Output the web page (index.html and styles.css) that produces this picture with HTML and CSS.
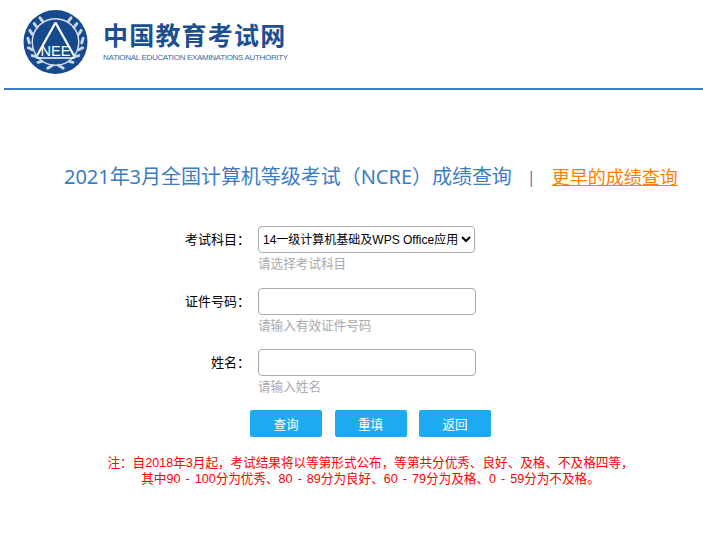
FILE: index.html
```html
<!DOCTYPE html>
<html lang="zh">
<head>
    <meta charset="UTF-8">
    <title>NCRE成绩查询</title>
<link rel="stylesheet" href="styles.css">
</head>
<body>
	<header class="top">
		<svg class="logo" width="65" height="64" viewBox="0 0 66 66">
			<circle cx="33" cy="33" r="33" fill="#164a8c"/>
			<circle cx="33" cy="33" r="24" fill="none" stroke="#d5e0ec" stroke-width="1.5"/>
			<path d="M33 13 L14 47 M33 13 L52 47" fill="none" stroke="#fff" stroke-width="2.2"/>
			<path d="M13 49.5 H53" stroke="#fff" stroke-width="1.5"/>
			<g fill="none" stroke="#c9d6e6" stroke-width="3" stroke-linecap="round">
				<path d="M4.5 29 L6 34 M6.5 21 L9 25 M11 14 L14 18 M17 8 L20 12 M5 39 L9 41 M9 47 L13 48 M15 54 L19 53"/>
				<path d="M61.500 29 L60 34 M59.500 21 L57 25 M55 14 L52 18 M49 8 L46 12 M61 39 L57 41 M57 47 L53 48 M51 54 L47 53"/>
				<path d="M25 60 L30 57 M41 60 L36 57"/>
			</g>
			<text class="logo-nee" x="33" y="47" text-anchor="middle">NEE</text>
		</svg>
		<div class="brand">
			<div class="brand-cn">中国教育考试网</div>
			<div class="brand-en">NATIONAL EDUCATION EXAMINATIONS AUTHORITY</div>
		</div>
	</header>
	<main>
		<h2 class="title">
			<span class="title-main">2021年3月全国计算机等级考试（NCRE）成绩查询</span>
			<span class="sep">|</span>
			<a href="#">更早的成绩查询</a>
		</h2>
		<form class="form">
			<div class="row">
				<label>考试科目：</label>
				<div class="field">
					<select class="ctrl">
						<option>14一级计算机基础及WPS Office应用</option>
					</select>
					<p class="hint">请选择考试科目</p>
				</div>
			</div>
			<div class="row">
				<label>证件号码：</label>
				<div class="field">
					<input type="text" class="ctrl">
					<p class="hint">请输入有效证件号码</p>
				</div>
			</div>
			<div class="row">
				<label>姓名：</label>
				<div class="field">
					<input type="text" class="ctrl">
					<p class="hint">请输入姓名</p>
				</div>
			</div>
			<div class="btns">
				<input type="button" value="查询">
				<input type="button" value="重填">
				<input type="button" value="返回">
			</div>
		</form>
		<p class="note">注：自2018年3月起，考试结果将以等第形式公布，等第共分优秀、良好、及格、不及格四等，<br>其中90 - 100分为优秀、80 - 89分为良好、60 - 79分为及格、0 - 59分为不及格。</p>
	</main>
</body>
</html>
```

FILE: styles.css
```css
*{padding:0;margin:0;box-sizing:border-box;}
body{
	font-family:"Liberation Sans","Noto Sans CJK SC",sans-serif;
	font-size:12.6px;
	color:#000;
	background:#fff;
	overflow:hidden;
}
.top{
	height:90px;
	margin-left:4px;
	padding:6px 0 0 19px;
	border-bottom:2px solid #3b7dc5;
	display:flex;
	align-items:flex-start;
}
.logo{margin-top:4px;}
.logo-nee{
	font-family:"Liberation Sans",sans-serif;
	font-size:15px;
	fill:#fff;
}
.brand{
	margin-left:15px;
	padding-top:14px;
	color:#1c4f8f;
}
.brand-cn{
	font-size:25px;
	line-height:32px;
	font-weight:700;
	letter-spacing:1.2px;
	white-space:nowrap;
}
.brand-en{
	font-size:8px;
	line-height:10px;
	margin-top:1px;
	letter-spacing:-.32px;
	color:#3a6a9e;
	white-space:nowrap;
}
.title{
	margin-top:72px;
	padding-left:64px;
	display:flex;
	align-items:center;
	font-family:"Noto Sans","Noto Sans CJK SC",sans-serif;
	font-size:20px;
	line-height:30px;
	font-weight:400;
	color:#3b7dc5;
	white-space:nowrap;
}
.title-main{letter-spacing:-.03px;}
.title .sep{
	margin:0 16px 0 15px;
	font-size:16px;
}
.title a{
	font-size:18px;
	color:#ff8000;
}
.form{margin-top:34px;}
.row{
	display:flex;
	height:61.5px;
}
.row label{
	width:250px;
	font-size:13px;
	line-height:27px;
	text-align:right;
}
.field{margin-left:8px;}
.ctrl{
	display:block;
	width:218px;
	height:27px;
	border:1px solid #aaa;
	border-radius:4px;
	background:#fff;
	font-family:"Liberation Sans","Noto Sans CJK SC",sans-serif;
	font-size:12px;
	outline:none;
}
select.ctrl{width:217px;}
.hint{
	margin-top:2px;
	line-height:18px;
	color:#aaa;
}
.btns{
	display:flex;
	gap:12.5px;
	margin:-1px 0 0 250px;
}
.btns input{
	width:72px;
	height:27px;
	border:none;
	border-radius:2px;
	background:#1eaaf1;
	color:#fff;
	font-family:"Liberation Sans","Noto Sans CJK SC",sans-serif;
	font-size:12.6px;
	cursor:pointer;
}
.note{
	margin:18px 0 0 38px;
	text-align:center;
	line-height:16px;
	word-spacing:1.5px;
	color:#f00;
	white-space:nowrap;
}
```
